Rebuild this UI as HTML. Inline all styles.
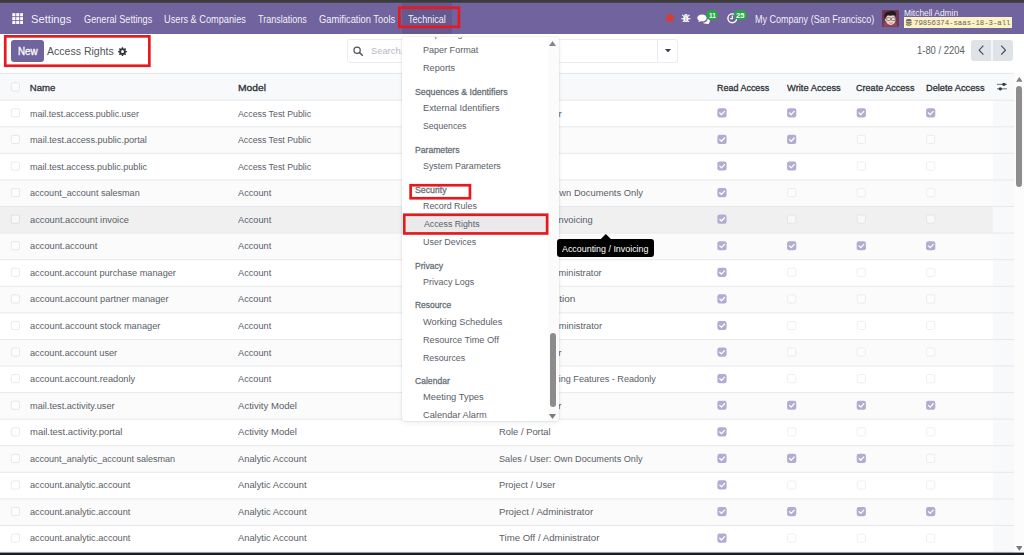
<!DOCTYPE html>
<html lang="en">
<head>
<meta charset="utf-8">
<title>Access Rights - Settings</title>
<style>
*{box-sizing:border-box;margin:0;padding:0}
html,body{width:1024px;height:555px;overflow:hidden;background:#fff}
body{position:relative;font-family:'Liberation Sans',sans-serif;font-size:9.6px;line-height:12px;color:#535960}
header,nav,main,section,aside{display:block;position:static}
.abs,.t{position:absolute}
.t{white-space:pre;line-height:12px;height:12px;transform-origin:0 50%}
#navbar{left:0;top:0;width:1024px;height:34px;background:#71639e}
#navactive{left:401.6px;top:3px;width:50.5px;height:31px;background:#665990}
#cp{left:0;top:34px;width:1024px;height:39px;background:#fff}
#btnnew{left:10.8px;top:39.8px;width:33.4px;height:22.4px;background:#71639e;border-radius:3px}
#search{left:346.6px;top:39.4px;width:331px;height:23.2px;border:1px solid #eaecf0;border-radius:3px;background:#fff}
#searchdiv{left:657px;top:40px;width:1px;height:22px;background:#e9ecef}
#pager{left:970.8px;top:39.7px;width:42.2px;height:21.1px;background:#dfe3e8;border-radius:3px}
#pagerdiv{left:991px;top:39.7px;width:1.6px;height:21.1px;background:#f3f4f6}
#vscroll{left:1014px;top:73px;width:10px;height:480px;background:#fcfcfc}
#vthumb{left:1016.2px;top:86px;width:5.4px;height:101.4px;background:#8d8d8d;border-radius:3px}
#dd{left:402px;top:37px;width:156.6px;height:383.6px;background:#fff;border-radius:3px;box-shadow:0 0 0 1px rgba(0,0,0,.045),0 2px 5px rgba(0,0,0,.07);overflow:hidden}
#ddclip{left:402px;top:37px;width:146px;height:383.6px;overflow:hidden}
#ddclip .t{margin-left:-402px;margin-top:-37px}
#ddtrack{left:548px;top:37px;width:10.6px;height:383.6px;background:#fbfbfb;border-radius:0 3px 3px 0}
#ddthumb{left:549.8px;top:333.4px;width:6px;height:74px;background:#8c8c8c;border-radius:3px}
#ddhover{left:403px;top:215px;width:145px;height:18.6px;background:#eaeaea}
#tip{left:556.7px;top:239px;width:97.2px;height:18.2px;background:#000;border-radius:3px}
#yellow{left:904.3px;top:16.6px;width:107.8px;height:11.4px;background:#fdf1c6}
#avatar{left:882.4px;top:10.2px;width:16.4px;height:16.6px;border-radius:2px;overflow:hidden;background:#6d3a4e}
.badge{height:10.2px;border-radius:5.2px;background:#2aa44a}
</style>
</head>
<body>
<header class="o_main_navbar">
<div class="abs" id="navbar"></div>
<svg class="abs" style="left:0;top:0" width="1024" height="4"><rect width="1024" height="2.75" fill="#3b3b3b"/></svg>
<div class="abs" id="navactive"></div>
<!-- apps grid icon -->
<svg class="abs" style="left:11.7px;top:12.7px" width="11.5" height="11.3" viewBox="0 0 11.8 11.8"><g fill="#fff"><rect x="0.2" y="0.2" width="3.2" height="3.2"/><rect x="4.3" y="0.2" width="3.2" height="3.2"/><rect x="8.4" y="0.2" width="3.2" height="3.2"/><rect x="0.2" y="4.3" width="3.2" height="3.2"/><rect x="4.3" y="4.3" width="3.2" height="3.2"/><rect x="8.4" y="4.3" width="3.2" height="3.2"/><rect x="0.2" y="8.4" width="3.2" height="3.2"/><rect x="4.3" y="8.4" width="3.2" height="3.2"/><rect x="8.4" y="8.4" width="3.2" height="3.2"/></g></svg>
<span class="t" style="left:30.71px;top:13px;font-size:11.4px;color:rgba(255,255,255,.93);transform:scaleX(0.9814);">Settings</span>
<span class="t" style="left:83.95px;top:14px;font-size:10.2px;color:rgba(255,255,255,.93);transform:scaleX(0.9000);">General Settings</span>
<span class="t" style="left:164.02px;top:14px;font-size:10.2px;color:rgba(255,255,255,.93);transform:scaleX(0.9039);">Users &amp; Companies</span>
<span class="t" style="left:258.38px;top:14px;font-size:10.2px;color:rgba(255,255,255,.93);transform:scaleX(0.8862);">Translations</span>
<span class="t" style="left:319.34px;top:14px;font-size:10.2px;color:rgba(255,255,255,.93);transform:scaleX(0.9167);">Gamification Tools</span>
<span class="t" style="left:407.78px;top:14px;font-size:10.2px;color:rgba(255,255,255,.93);transform:scaleX(0.8916);">Technical</span>
<span class="t" style="left:755.14px;top:14px;font-size:10.2px;color:rgba(255,255,255,.93);transform:scaleX(0.8854);">My Company (San Francisco)</span>
<span class="t" style="left:904.31px;top:7px;font-size:9.2px;color:rgba(255,255,255,.93);transform:scaleX(0.9138);">Mitchell Admin</span>
<!-- systray -->
<div class="abs" style="left:665.5px;top:13.7px;width:8.4px;height:8.4px;border-radius:50%;background:#d13f3c"></div>
<svg class="abs" style="left:681.3px;top:12.5px" width="9.8" height="9.8" viewBox="0 0 20 20"><g fill="#fff"><ellipse cx="10" cy="12" rx="5.2" ry="6.6"/><path d="M6 5.600a4 3.800 0 0 1 8 0z"/><rect x="0.600" y="10.600" width="18.800" height="2.200"/><path d="M1.800 4.800l4 3.300 1.500-1.700-4-3.300zM18.200 4.800l-4 3.300-1.500-1.700 4-3.300zM1.800 18.800l4-3.300 1.500 1.700-4 3.300zM18.200 18.800l-4-3.300-1.500 1.700 4 3.300z"/></g><rect x="9.300" y="7.500" width="1.400" height="9.500" fill="#8d82b3"/></svg>
<svg class="abs" style="left:697.4px;top:13.6px" width="13" height="10.6" viewBox="0 0 26 21"><g fill="#fff"><path d="M10 1C4.8 1 0.6 4 0.6 7.8c0 2.1 1.3 4 3.4 5.2-.3 1.1-.9 2.1-1.8 3 1.8-.2 3.4-.8 4.700-1.800 1 .200 2 .400 3.100 .400 5.200 0 9.400-3 9.400-6.800S15.200 1 10 1z"/><path d="M21.300 9.600c.050 4.300-4.300 7.500-9.800 7.900 1.600 1.300 3.900 2.100 6.400 2.100 1 0 2-.150 2.900-.400 1.300 1 2.800 1.500 4.400 1.700-.8-.8-1.400-1.700-1.700-2.700 1.500-1.100 2.400-2.600 2.400-4.300 0-1.700-1.700-3.400-4.600-4.300z"/></g></svg>
<div class="abs badge" style="left:706.2px;top:9.7px;width:11.8px"></div>
<svg class="abs" style="left:727px;top:13.2px" width="10.6" height="10.6" viewBox="0 0 20 20"><circle cx="10" cy="10" r="8.3" fill="none" stroke="#fff" stroke-width="2.6"/><path d="M10 4.500V10.600H6" fill="none" stroke="#fff" stroke-width="2.2"/></svg>
<div class="abs badge" style="left:733.5px;top:10.2px;width:13px"></div>
<div class="abs" id="avatar">
<svg width="16.4" height="16.6" viewBox="0 0 33 33"><rect width="33" height="33" fill="#6f3550"/><path d="M3 33v-5c0-3 4-5 8-5h11c4 0 8 2 8 5v5z" fill="#8b4a63"/><ellipse cx="17.500" cy="19" rx="9.800" ry="10.800" fill="#f6d3bd"/><ellipse cx="7.600" cy="20" rx="1.800" ry="2.600" fill="#f0c4aa"/><path d="M5.500 17.500C3 9 7 2.500 15 3c2-1.500 9-2 12.500 1.500 1 2.500.5 6-.5 8.500-.5-1.500-1.500-2.500-3-3-4 1.500-9.500 1.500-13 .5-2 1.500-3.500 3.500-5.500 7z" fill="#1f1c1e"/><rect x="9.500" y="15.500" width="7.500" height="5.200" rx="1" fill="#f4f4f4" stroke="#3b3b3f" stroke-width="1.200"/><rect x="19" y="15.500" width="7.500" height="5.200" rx="1" fill="#f4f4f4" stroke="#3b3b3f" stroke-width="1.200"/><path d="M14 25.500q4 2.400 8 0" stroke="#b06a58" stroke-width="1.300" fill="none"/></svg>
</div>
<div class="abs" id="yellow"></div>
<svg class="abs" style="left:906.3px;top:19.2px" width="5.600" height="6.800" viewBox="0 0 10 12"><g fill="#6a6a62"><ellipse cx="5" cy="2.200" rx="5" ry="2.200"/><path d="M0 3.700v2.400c0 1.200 2.200 2.200 5 2.200s5-1 5-2.200V3.700c0 1.200-2.200 2.200-5 2.200S0 4.900 0 3.700z"/><path d="M0 7.400v2.400c0 1.200 2.200 2.200 5 2.200s5-1 5-2.200V7.400c0 1.200-2.200 2.200-5 2.200S0 8.600 0 7.400z"/></g></svg>
<span class="t" style="left:913.84px;top:17px;font-size:8px;color:#66665c;transform:scaleX(0.9136);font-family:'Liberation Mono', monospace;">79856374-saas-18-3-all</span>
<span class="t" style="left:708.80px;top:10px;font-size:8px;color:#fff;transform:scaleX(0.8000);font-weight:700;">11</span>
<span class="t" style="left:735.76px;top:10px;font-size:8px;color:#fff;transform:scaleX(0.9412);font-weight:700;">25</span>
</header>

<!-- control panel -->
<section class="o_control_panel">
<div class="abs" id="cp"></div>
<div class="abs" id="btnnew"></div>
<div class="abs" id="search"></div>
<div class="abs" id="searchdiv"></div>
<svg class="abs" style="left:353.2px;top:46.2px" width="10.4" height="10" viewBox="0 0 21 20"><circle cx="8.300" cy="8.300" r="6.300" fill="none" stroke="#4c5258" stroke-width="2.500"/><path d="M13 13l5.800 5.600" stroke="#4c5258" stroke-width="3" stroke-linecap="round"/></svg>
<svg class="abs" style="left:664.8px;top:48.6px" width="6" height="3.600" viewBox="0 0 10 6"><path d="M0 0h10L5 6z" fill="#3d434a"/></svg>
<div class="abs" id="pager"></div>
<div class="abs" id="pagerdiv"></div>
<svg class="abs" style="left:978.2px;top:45.2px" width="6.6" height="10.4" viewBox="0 0 7 11"><path d="M5.700 0.700L1.200 5.500l4.500 4.800" fill="none" stroke="#3b4553" stroke-width="1.150"/></svg>
<svg class="abs" style="left:999.6px;top:45.2px" width="6.6" height="10.4" viewBox="0 0 7 11"><path d="M1.300 0.700L5.800 5.500l-4.500 4.800" fill="none" stroke="#3b4553" stroke-width="1.150"/></svg>
<svg class="abs" style="left:118.2px;top:46.6px" width="9" height="9" viewBox="0 0 24 24"><path fill="#30363c" fill-rule="evenodd" d="M10.200 0.500h3.600l.6 3.200 1.900.8 2.700-1.800 2.500 2.500-1.800 2.700.8 1.900 3.200.6v3.600l-3.200.6-.8 1.900 1.800 2.700-2.500 2.500-2.700-1.800-1.900.8-.6 3.200h-3.600l-.6-3.200-1.900-.8-2.700 1.800-2.500-2.500 1.800-2.700-.8-1.900-3.200-.6v-3.600l3.200-.6.8-1.900-1.800-2.700 2.500-2.500 2.700 1.800 1.900-.8zM12 8a4 4 0 1 0 0 8 4 4 0 0 0 0-8z"/></svg>
<span class="t" style="left:17.67px;top:46px;font-size:10.2px;color:#fff;transform:scaleX(0.9671);-webkit-text-stroke:0.28px #fff;">New</span>
<span class="t" style="left:47.20px;top:45px;font-size:11.4px;color:#50565d;transform:scaleX(0.9254);">Access Rights</span>
<span class="t" style="left:370.51px;top:45px;font-size:9.6px;color:#b4b9bf;transform:scaleX(0.9730);">Search...</span>
<span class="t" style="left:917.41px;top:45px;font-size:10.2px;color:#585e65;transform:scaleX(0.9248);">1-80 / 2204</span>
</section>

<!-- list -->
<main class="o_list_view">
<svg class="abs" style="left:0;top:0" width="1024" height="555" viewBox="0 0 1024 555">
<rect x="0" y="73.4" width="1014" height="27" fill="#f8f9fb"/>
<rect x="0" y="126.78" width="993" height="26.58" fill="#fbfbfb"/>
<rect x="0" y="179.94" width="993" height="26.58" fill="#fbfbfb"/>
<rect x="0" y="206.52" width="993" height="26.58" fill="#f0f0f0"/>
<rect x="0" y="233.10" width="993" height="26.58" fill="#fbfbfb"/>
<rect x="0" y="286.26" width="993" height="26.58" fill="#fbfbfb"/>
<rect x="0" y="339.42" width="993" height="26.58" fill="#fbfbfb"/>
<rect x="0" y="392.58" width="993" height="26.58" fill="#fbfbfb"/>
<rect x="0" y="445.74" width="993" height="26.58" fill="#fbfbfb"/>
<rect x="0" y="498.90" width="993" height="26.58" fill="#fbfbfb"/>
<rect x="992.8" y="100.2" width="21.2" height="451.80" fill="#f8f9fb"/>
<rect x="0" y="72.9" width="1014" height="1" fill="#e3e6e9"/>
<rect x="0" y="99.70" width="1014" height="1" fill="#e6e8eb"/>
<rect x="0" y="126.28" width="1014" height="1" fill="#e6e8eb"/>
<rect x="0" y="152.86" width="1014" height="1" fill="#e6e8eb"/>
<rect x="0" y="179.44" width="1014" height="1" fill="#e6e8eb"/>
<rect x="0" y="206.02" width="1014" height="1" fill="#e6e8eb"/>
<rect x="0" y="232.60" width="1014" height="1" fill="#e6e8eb"/>
<rect x="0" y="259.18" width="1014" height="1" fill="#e6e8eb"/>
<rect x="0" y="285.76" width="1014" height="1" fill="#e6e8eb"/>
<rect x="0" y="312.34" width="1014" height="1" fill="#e6e8eb"/>
<rect x="0" y="338.92" width="1014" height="1" fill="#e6e8eb"/>
<rect x="0" y="365.50" width="1014" height="1" fill="#e6e8eb"/>
<rect x="0" y="392.08" width="1014" height="1" fill="#e6e8eb"/>
<rect x="0" y="418.66" width="1014" height="1" fill="#e6e8eb"/>
<rect x="0" y="445.24" width="1014" height="1" fill="#e6e8eb"/>
<rect x="0" y="471.82" width="1014" height="1" fill="#e6e8eb"/>
<rect x="0" y="498.40" width="1014" height="1" fill="#e6e8eb"/>
<rect x="0" y="524.98" width="1014" height="1" fill="#e6e8eb"/>
<rect x="0" y="551.56" width="1014" height="1" fill="#e6e8eb"/>
<rect x="11.30" y="82.80" width="8.2" height="8.2" rx="1.8" fill="#fff" fill-opacity=".5" stroke="#6e7682" stroke-opacity="0.15" stroke-width="1"/>
<rect x="11.30" y="108.75" width="8.2" height="8.2" rx="1.8" fill="#fff" fill-opacity=".5" stroke="#6e7682" stroke-opacity="0.15" stroke-width="1"/>
<rect x="717.40" y="108.25" width="9.2" height="9.2" rx="2.1" fill="#b4abd0"/><path d="M719.75 113.00 l1.75 1.7 l3.0 -3.3" fill="none" stroke="#fff" stroke-width="1.25" stroke-linecap="round" stroke-linejoin="round"/>
<rect x="787.10" y="108.25" width="9.2" height="9.2" rx="2.1" fill="#b4abd0"/><path d="M789.45 113.00 l1.75 1.7 l3.0 -3.3" fill="none" stroke="#fff" stroke-width="1.25" stroke-linecap="round" stroke-linejoin="round"/>
<rect x="856.70" y="108.25" width="9.2" height="9.2" rx="2.1" fill="#b4abd0"/><path d="M859.05 113.00 l1.75 1.7 l3.0 -3.3" fill="none" stroke="#fff" stroke-width="1.25" stroke-linecap="round" stroke-linejoin="round"/>
<rect x="926.10" y="108.25" width="9.2" height="9.2" rx="2.1" fill="#b4abd0"/><path d="M928.45 113.00 l1.75 1.7 l3.0 -3.3" fill="none" stroke="#fff" stroke-width="1.25" stroke-linecap="round" stroke-linejoin="round"/>
<rect x="11.30" y="135.33" width="8.2" height="8.2" rx="1.8" fill="#fff" fill-opacity=".5" stroke="#6e7682" stroke-opacity="0.15" stroke-width="1"/>
<rect x="717.40" y="134.83" width="9.2" height="9.2" rx="2.1" fill="#b4abd0"/><path d="M719.75 139.58 l1.75 1.7 l3.0 -3.3" fill="none" stroke="#fff" stroke-width="1.25" stroke-linecap="round" stroke-linejoin="round"/>
<rect x="787.10" y="134.83" width="9.2" height="9.2" rx="2.1" fill="#b4abd0"/><path d="M789.45 139.58 l1.75 1.7 l3.0 -3.3" fill="none" stroke="#fff" stroke-width="1.25" stroke-linecap="round" stroke-linejoin="round"/>
<rect x="857.20" y="135.33" width="8.2" height="8.2" rx="1.8" fill="#fff" fill-opacity=".5" stroke="#6e7682" stroke-opacity="0.11" stroke-width="1"/>
<rect x="926.60" y="135.33" width="8.2" height="8.2" rx="1.8" fill="#fff" fill-opacity=".5" stroke="#6e7682" stroke-opacity="0.11" stroke-width="1"/>
<rect x="11.30" y="161.91" width="8.2" height="8.2" rx="1.8" fill="#fff" fill-opacity=".5" stroke="#6e7682" stroke-opacity="0.15" stroke-width="1"/>
<rect x="717.40" y="161.41" width="9.2" height="9.2" rx="2.1" fill="#b4abd0"/><path d="M719.75 166.16 l1.75 1.7 l3.0 -3.3" fill="none" stroke="#fff" stroke-width="1.25" stroke-linecap="round" stroke-linejoin="round"/>
<rect x="787.10" y="161.41" width="9.2" height="9.2" rx="2.1" fill="#b4abd0"/><path d="M789.45 166.16 l1.75 1.7 l3.0 -3.3" fill="none" stroke="#fff" stroke-width="1.25" stroke-linecap="round" stroke-linejoin="round"/>
<rect x="857.20" y="161.91" width="8.2" height="8.2" rx="1.8" fill="#fff" fill-opacity=".5" stroke="#6e7682" stroke-opacity="0.11" stroke-width="1"/>
<rect x="926.60" y="161.91" width="8.2" height="8.2" rx="1.8" fill="#fff" fill-opacity=".5" stroke="#6e7682" stroke-opacity="0.11" stroke-width="1"/>
<rect x="11.30" y="188.49" width="8.2" height="8.2" rx="1.8" fill="#fff" fill-opacity=".5" stroke="#6e7682" stroke-opacity="0.15" stroke-width="1"/>
<rect x="717.40" y="187.99" width="9.2" height="9.2" rx="2.1" fill="#b4abd0"/><path d="M719.75 192.74 l1.75 1.7 l3.0 -3.3" fill="none" stroke="#fff" stroke-width="1.25" stroke-linecap="round" stroke-linejoin="round"/>
<rect x="787.60" y="188.49" width="8.2" height="8.2" rx="1.8" fill="#fff" fill-opacity=".5" stroke="#6e7682" stroke-opacity="0.11" stroke-width="1"/>
<rect x="857.20" y="188.49" width="8.2" height="8.2" rx="1.8" fill="#fff" fill-opacity=".5" stroke="#6e7682" stroke-opacity="0.11" stroke-width="1"/>
<rect x="926.60" y="188.49" width="8.2" height="8.2" rx="1.8" fill="#fff" fill-opacity=".5" stroke="#6e7682" stroke-opacity="0.11" stroke-width="1"/>
<rect x="11.30" y="215.07" width="8.2" height="8.2" rx="1.8" fill="#fff" fill-opacity=".5" stroke="#6e7682" stroke-opacity="0.15" stroke-width="1"/>
<rect x="717.40" y="214.57" width="9.2" height="9.2" rx="2.1" fill="#b4abd0"/><path d="M719.75 219.32 l1.75 1.7 l3.0 -3.3" fill="none" stroke="#fff" stroke-width="1.25" stroke-linecap="round" stroke-linejoin="round"/>
<rect x="787.60" y="215.07" width="8.2" height="8.2" rx="1.8" fill="#fff" fill-opacity=".5" stroke="#6e7682" stroke-opacity="0.11" stroke-width="1"/>
<rect x="857.20" y="215.07" width="8.2" height="8.2" rx="1.8" fill="#fff" fill-opacity=".5" stroke="#6e7682" stroke-opacity="0.11" stroke-width="1"/>
<rect x="926.60" y="215.07" width="8.2" height="8.2" rx="1.8" fill="#fff" fill-opacity=".5" stroke="#6e7682" stroke-opacity="0.11" stroke-width="1"/>
<rect x="11.30" y="241.65" width="8.2" height="8.2" rx="1.8" fill="#fff" fill-opacity=".5" stroke="#6e7682" stroke-opacity="0.15" stroke-width="1"/>
<rect x="717.40" y="241.15" width="9.2" height="9.2" rx="2.1" fill="#b4abd0"/><path d="M719.75 245.90 l1.75 1.7 l3.0 -3.3" fill="none" stroke="#fff" stroke-width="1.25" stroke-linecap="round" stroke-linejoin="round"/>
<rect x="787.10" y="241.15" width="9.2" height="9.2" rx="2.1" fill="#b4abd0"/><path d="M789.45 245.90 l1.75 1.7 l3.0 -3.3" fill="none" stroke="#fff" stroke-width="1.25" stroke-linecap="round" stroke-linejoin="round"/>
<rect x="856.70" y="241.15" width="9.2" height="9.2" rx="2.1" fill="#b4abd0"/><path d="M859.05 245.90 l1.75 1.7 l3.0 -3.3" fill="none" stroke="#fff" stroke-width="1.25" stroke-linecap="round" stroke-linejoin="round"/>
<rect x="926.10" y="241.15" width="9.2" height="9.2" rx="2.1" fill="#b4abd0"/><path d="M928.45 245.90 l1.75 1.7 l3.0 -3.3" fill="none" stroke="#fff" stroke-width="1.25" stroke-linecap="round" stroke-linejoin="round"/>
<rect x="11.30" y="268.23" width="8.2" height="8.2" rx="1.8" fill="#fff" fill-opacity=".5" stroke="#6e7682" stroke-opacity="0.15" stroke-width="1"/>
<rect x="717.40" y="267.73" width="9.2" height="9.2" rx="2.1" fill="#b4abd0"/><path d="M719.75 272.48 l1.75 1.7 l3.0 -3.3" fill="none" stroke="#fff" stroke-width="1.25" stroke-linecap="round" stroke-linejoin="round"/>
<rect x="787.60" y="268.23" width="8.2" height="8.2" rx="1.8" fill="#fff" fill-opacity=".5" stroke="#6e7682" stroke-opacity="0.11" stroke-width="1"/>
<rect x="857.20" y="268.23" width="8.2" height="8.2" rx="1.8" fill="#fff" fill-opacity=".5" stroke="#6e7682" stroke-opacity="0.11" stroke-width="1"/>
<rect x="926.60" y="268.23" width="8.2" height="8.2" rx="1.8" fill="#fff" fill-opacity=".5" stroke="#6e7682" stroke-opacity="0.11" stroke-width="1"/>
<rect x="11.30" y="294.81" width="8.2" height="8.2" rx="1.8" fill="#fff" fill-opacity=".5" stroke="#6e7682" stroke-opacity="0.15" stroke-width="1"/>
<rect x="717.40" y="294.31" width="9.2" height="9.2" rx="2.1" fill="#b4abd0"/><path d="M719.75 299.06 l1.75 1.7 l3.0 -3.3" fill="none" stroke="#fff" stroke-width="1.25" stroke-linecap="round" stroke-linejoin="round"/>
<rect x="787.60" y="294.81" width="8.2" height="8.2" rx="1.8" fill="#fff" fill-opacity=".5" stroke="#6e7682" stroke-opacity="0.11" stroke-width="1"/>
<rect x="857.20" y="294.81" width="8.2" height="8.2" rx="1.8" fill="#fff" fill-opacity=".5" stroke="#6e7682" stroke-opacity="0.11" stroke-width="1"/>
<rect x="926.60" y="294.81" width="8.2" height="8.2" rx="1.8" fill="#fff" fill-opacity=".5" stroke="#6e7682" stroke-opacity="0.11" stroke-width="1"/>
<rect x="11.30" y="321.39" width="8.2" height="8.2" rx="1.8" fill="#fff" fill-opacity=".5" stroke="#6e7682" stroke-opacity="0.15" stroke-width="1"/>
<rect x="717.40" y="320.89" width="9.2" height="9.2" rx="2.1" fill="#b4abd0"/><path d="M719.75 325.64 l1.75 1.7 l3.0 -3.3" fill="none" stroke="#fff" stroke-width="1.25" stroke-linecap="round" stroke-linejoin="round"/>
<rect x="787.60" y="321.39" width="8.2" height="8.2" rx="1.8" fill="#fff" fill-opacity=".5" stroke="#6e7682" stroke-opacity="0.11" stroke-width="1"/>
<rect x="857.20" y="321.39" width="8.2" height="8.2" rx="1.8" fill="#fff" fill-opacity=".5" stroke="#6e7682" stroke-opacity="0.11" stroke-width="1"/>
<rect x="926.60" y="321.39" width="8.2" height="8.2" rx="1.8" fill="#fff" fill-opacity=".5" stroke="#6e7682" stroke-opacity="0.11" stroke-width="1"/>
<rect x="11.30" y="347.97" width="8.2" height="8.2" rx="1.8" fill="#fff" fill-opacity=".5" stroke="#6e7682" stroke-opacity="0.15" stroke-width="1"/>
<rect x="717.40" y="347.47" width="9.2" height="9.2" rx="2.1" fill="#b4abd0"/><path d="M719.75 352.22 l1.75 1.7 l3.0 -3.3" fill="none" stroke="#fff" stroke-width="1.25" stroke-linecap="round" stroke-linejoin="round"/>
<rect x="787.60" y="347.97" width="8.2" height="8.2" rx="1.8" fill="#fff" fill-opacity=".5" stroke="#6e7682" stroke-opacity="0.11" stroke-width="1"/>
<rect x="857.20" y="347.97" width="8.2" height="8.2" rx="1.8" fill="#fff" fill-opacity=".5" stroke="#6e7682" stroke-opacity="0.11" stroke-width="1"/>
<rect x="926.60" y="347.97" width="8.2" height="8.2" rx="1.8" fill="#fff" fill-opacity=".5" stroke="#6e7682" stroke-opacity="0.11" stroke-width="1"/>
<rect x="11.30" y="374.55" width="8.2" height="8.2" rx="1.8" fill="#fff" fill-opacity=".5" stroke="#6e7682" stroke-opacity="0.15" stroke-width="1"/>
<rect x="717.40" y="374.05" width="9.2" height="9.2" rx="2.1" fill="#b4abd0"/><path d="M719.75 378.80 l1.75 1.7 l3.0 -3.3" fill="none" stroke="#fff" stroke-width="1.25" stroke-linecap="round" stroke-linejoin="round"/>
<rect x="787.60" y="374.55" width="8.2" height="8.2" rx="1.8" fill="#fff" fill-opacity=".5" stroke="#6e7682" stroke-opacity="0.11" stroke-width="1"/>
<rect x="857.20" y="374.55" width="8.2" height="8.2" rx="1.8" fill="#fff" fill-opacity=".5" stroke="#6e7682" stroke-opacity="0.11" stroke-width="1"/>
<rect x="926.60" y="374.55" width="8.2" height="8.2" rx="1.8" fill="#fff" fill-opacity=".5" stroke="#6e7682" stroke-opacity="0.11" stroke-width="1"/>
<rect x="11.30" y="401.13" width="8.2" height="8.2" rx="1.8" fill="#fff" fill-opacity=".5" stroke="#6e7682" stroke-opacity="0.15" stroke-width="1"/>
<rect x="717.40" y="400.63" width="9.2" height="9.2" rx="2.1" fill="#b4abd0"/><path d="M719.75 405.38 l1.75 1.7 l3.0 -3.3" fill="none" stroke="#fff" stroke-width="1.25" stroke-linecap="round" stroke-linejoin="round"/>
<rect x="787.10" y="400.63" width="9.2" height="9.2" rx="2.1" fill="#b4abd0"/><path d="M789.45 405.38 l1.75 1.7 l3.0 -3.3" fill="none" stroke="#fff" stroke-width="1.25" stroke-linecap="round" stroke-linejoin="round"/>
<rect x="856.70" y="400.63" width="9.2" height="9.2" rx="2.1" fill="#b4abd0"/><path d="M859.05 405.38 l1.75 1.7 l3.0 -3.3" fill="none" stroke="#fff" stroke-width="1.25" stroke-linecap="round" stroke-linejoin="round"/>
<rect x="926.10" y="400.63" width="9.2" height="9.2" rx="2.1" fill="#b4abd0"/><path d="M928.45 405.38 l1.75 1.7 l3.0 -3.3" fill="none" stroke="#fff" stroke-width="1.25" stroke-linecap="round" stroke-linejoin="round"/>
<rect x="11.30" y="427.71" width="8.2" height="8.2" rx="1.8" fill="#fff" fill-opacity=".5" stroke="#6e7682" stroke-opacity="0.15" stroke-width="1"/>
<rect x="717.40" y="427.21" width="9.2" height="9.2" rx="2.1" fill="#b4abd0"/><path d="M719.75 431.96 l1.75 1.7 l3.0 -3.3" fill="none" stroke="#fff" stroke-width="1.25" stroke-linecap="round" stroke-linejoin="round"/>
<rect x="787.60" y="427.71" width="8.2" height="8.2" rx="1.8" fill="#fff" fill-opacity=".5" stroke="#6e7682" stroke-opacity="0.11" stroke-width="1"/>
<rect x="857.20" y="427.71" width="8.2" height="8.2" rx="1.8" fill="#fff" fill-opacity=".5" stroke="#6e7682" stroke-opacity="0.11" stroke-width="1"/>
<rect x="926.60" y="427.71" width="8.2" height="8.2" rx="1.8" fill="#fff" fill-opacity=".5" stroke="#6e7682" stroke-opacity="0.11" stroke-width="1"/>
<rect x="11.30" y="454.29" width="8.2" height="8.2" rx="1.8" fill="#fff" fill-opacity=".5" stroke="#6e7682" stroke-opacity="0.15" stroke-width="1"/>
<rect x="717.40" y="453.79" width="9.2" height="9.2" rx="2.1" fill="#b4abd0"/><path d="M719.75 458.54 l1.75 1.7 l3.0 -3.3" fill="none" stroke="#fff" stroke-width="1.25" stroke-linecap="round" stroke-linejoin="round"/>
<rect x="787.10" y="453.79" width="9.2" height="9.2" rx="2.1" fill="#b4abd0"/><path d="M789.45 458.54 l1.75 1.7 l3.0 -3.3" fill="none" stroke="#fff" stroke-width="1.25" stroke-linecap="round" stroke-linejoin="round"/>
<rect x="856.70" y="453.79" width="9.2" height="9.2" rx="2.1" fill="#b4abd0"/><path d="M859.05 458.54 l1.75 1.7 l3.0 -3.3" fill="none" stroke="#fff" stroke-width="1.25" stroke-linecap="round" stroke-linejoin="round"/>
<rect x="926.60" y="454.29" width="8.2" height="8.2" rx="1.8" fill="#fff" fill-opacity=".5" stroke="#6e7682" stroke-opacity="0.11" stroke-width="1"/>
<rect x="11.30" y="480.87" width="8.2" height="8.2" rx="1.8" fill="#fff" fill-opacity=".5" stroke="#6e7682" stroke-opacity="0.15" stroke-width="1"/>
<rect x="717.40" y="480.37" width="9.2" height="9.2" rx="2.1" fill="#b4abd0"/><path d="M719.75 485.12 l1.75 1.7 l3.0 -3.3" fill="none" stroke="#fff" stroke-width="1.25" stroke-linecap="round" stroke-linejoin="round"/>
<rect x="787.60" y="480.87" width="8.2" height="8.2" rx="1.8" fill="#fff" fill-opacity=".5" stroke="#6e7682" stroke-opacity="0.11" stroke-width="1"/>
<rect x="857.20" y="480.87" width="8.2" height="8.2" rx="1.8" fill="#fff" fill-opacity=".5" stroke="#6e7682" stroke-opacity="0.11" stroke-width="1"/>
<rect x="926.60" y="480.87" width="8.2" height="8.2" rx="1.8" fill="#fff" fill-opacity=".5" stroke="#6e7682" stroke-opacity="0.11" stroke-width="1"/>
<rect x="11.30" y="507.45" width="8.2" height="8.2" rx="1.8" fill="#fff" fill-opacity=".5" stroke="#6e7682" stroke-opacity="0.15" stroke-width="1"/>
<rect x="717.40" y="506.95" width="9.2" height="9.2" rx="2.1" fill="#b4abd0"/><path d="M719.75 511.70 l1.75 1.7 l3.0 -3.3" fill="none" stroke="#fff" stroke-width="1.25" stroke-linecap="round" stroke-linejoin="round"/>
<rect x="787.10" y="506.95" width="9.2" height="9.2" rx="2.1" fill="#b4abd0"/><path d="M789.45 511.70 l1.75 1.7 l3.0 -3.3" fill="none" stroke="#fff" stroke-width="1.25" stroke-linecap="round" stroke-linejoin="round"/>
<rect x="856.70" y="506.95" width="9.2" height="9.2" rx="2.1" fill="#b4abd0"/><path d="M859.05 511.70 l1.75 1.7 l3.0 -3.3" fill="none" stroke="#fff" stroke-width="1.25" stroke-linecap="round" stroke-linejoin="round"/>
<rect x="926.10" y="506.95" width="9.2" height="9.2" rx="2.1" fill="#b4abd0"/><path d="M928.45 511.70 l1.75 1.7 l3.0 -3.3" fill="none" stroke="#fff" stroke-width="1.25" stroke-linecap="round" stroke-linejoin="round"/>
<rect x="11.30" y="534.03" width="8.2" height="8.2" rx="1.8" fill="#fff" fill-opacity=".5" stroke="#6e7682" stroke-opacity="0.15" stroke-width="1"/>
<rect x="717.40" y="533.53" width="9.2" height="9.2" rx="2.1" fill="#b4abd0"/><path d="M719.75 538.28 l1.75 1.7 l3.0 -3.3" fill="none" stroke="#fff" stroke-width="1.25" stroke-linecap="round" stroke-linejoin="round"/>
<rect x="787.60" y="534.03" width="8.2" height="8.2" rx="1.8" fill="#fff" fill-opacity=".5" stroke="#6e7682" stroke-opacity="0.11" stroke-width="1"/>
<rect x="857.20" y="534.03" width="8.2" height="8.2" rx="1.8" fill="#fff" fill-opacity=".5" stroke="#6e7682" stroke-opacity="0.11" stroke-width="1"/>
<rect x="926.60" y="534.03" width="8.2" height="8.2" rx="1.8" fill="#fff" fill-opacity=".5" stroke="#6e7682" stroke-opacity="0.11" stroke-width="1"/>
</svg>
<svg class="abs" style="left:997px;top:82.4px" width="10" height="9.200" viewBox="0 0 20 18.400"><g fill="none" stroke="#3a424d" stroke-width="1.500"><path d="M0 4.700h20M0 13.700h20"/></g><circle cx="13.800" cy="4.700" r="3.400" fill="#333b46"/><circle cx="6.600" cy="13.700" r="3.400" fill="#333b46"/></svg>
<span class="t" style="left:29.75px;top:82px;font-size:9.6px;color:#2c3036;transform:scaleX(1.0000);-webkit-text-stroke:0.28px #2c3036;">Name</span>
<span class="t" style="left:237.59px;top:82px;font-size:9.6px;color:#2c3036;transform:scaleX(1.0747);-webkit-text-stroke:0.28px #2c3036;">Model</span>
<span class="t" style="left:498.95px;top:82px;font-size:9.6px;color:#2c3036;transform:scaleX(1.1068);-webkit-text-stroke:0.28px #2c3036;">Group</span>
<span class="t" style="left:716.90px;top:82px;font-size:9.6px;color:#2c3036;transform:scaleX(0.9345);-webkit-text-stroke:0.28px #2c3036;">Read Access</span>
<span class="t" style="left:787.30px;top:82px;font-size:9.6px;color:#2c3036;transform:scaleX(0.9727);-webkit-text-stroke:0.28px #2c3036;">Write Access</span>
<span class="t" style="left:855.93px;top:82px;font-size:9.6px;color:#2c3036;transform:scaleX(0.9443);-webkit-text-stroke:0.28px #2c3036;">Create Access</span>
<span class="t" style="left:925.78px;top:82px;font-size:9.6px;color:#2c3036;transform:scaleX(0.9623);-webkit-text-stroke:0.28px #2c3036;">Delete Access</span>
<span class="t" style="left:30.04px;top:108px;font-size:9.6px;color:#5a6067;transform:scaleX(0.9285);">mail.test.access.public.user</span>
<span class="t" style="left:238.40px;top:108px;font-size:9.6px;color:#5a6067;transform:scaleX(0.9164);">Access Test Public</span>
<span class="t" style="left:513.60px;top:108px;font-size:9.6px;color:#5a6067;transform:scaleX(1.0000);">Role / User</span>
<span class="t" style="left:30.02px;top:134px;font-size:9.6px;color:#5a6067;transform:scaleX(0.9523);">mail.test.access.public.portal</span>
<span class="t" style="left:238.40px;top:134px;font-size:9.6px;color:#5a6067;transform:scaleX(0.9164);">Access Test Public</span>
<span class="t" style="left:498.77px;top:134px;font-size:9.6px;color:#5a6067;transform:scaleX(0.9786);">Role / Portal</span>
<span class="t" style="left:30.03px;top:161px;font-size:9.6px;color:#5a6067;transform:scaleX(0.9455);">mail.test.access.public.public</span>
<span class="t" style="left:238.40px;top:161px;font-size:9.6px;color:#5a6067;transform:scaleX(0.9164);">Access Test Public</span>
<span class="t" style="left:498.79px;top:161px;font-size:9.6px;color:#5a6067;transform:scaleX(0.9509);">Role / Public</span>
<span class="t" style="left:30.03px;top:187px;font-size:9.6px;color:#5a6067;transform:scaleX(0.9432);">account_account salesman</span>
<span class="t" style="left:238.40px;top:187px;font-size:9.6px;color:#5a6067;transform:scaleX(0.9583);">Account</span>
<span class="t" style="left:495.61px;top:187px;font-size:9.6px;color:#5a6067;transform:scaleX(0.9738);">Sales / User: Own Documents Only</span>
<span class="t" style="left:30.02px;top:214px;font-size:9.6px;color:#5a6067;transform:scaleX(0.9665);">account.account invoice</span>
<span class="t" style="left:238.40px;top:214px;font-size:9.6px;color:#5a6067;transform:scaleX(0.9583);">Account</span>
<span class="t" style="left:502.02px;top:214px;font-size:9.6px;color:#5a6067;transform:scaleX(0.9723);">Accounting / Invoicing</span>
<span class="t" style="left:30.02px;top:240px;font-size:9.6px;color:#5a6067;transform:scaleX(0.9632);">account.account</span>
<span class="t" style="left:238.40px;top:240px;font-size:9.6px;color:#5a6067;transform:scaleX(0.9583);">Account</span>
<span class="t" style="left:504.00px;top:240px;font-size:9.6px;color:#5a6067;transform:scaleX(1.0000);">Role / User</span>
<span class="t" style="left:30.02px;top:267px;font-size:9.6px;color:#5a6067;transform:scaleX(0.9566);">account.account purchase manager</span>
<span class="t" style="left:238.40px;top:267px;font-size:9.6px;color:#5a6067;transform:scaleX(0.9583);">Account</span>
<span class="t" style="left:500.90px;top:267px;font-size:9.6px;color:#5a6067;transform:scaleX(0.9627);">Purchase / Administrator</span>
<span class="t" style="left:30.02px;top:293px;font-size:9.6px;color:#5a6067;transform:scaleX(0.9660);">account.account partner manager</span>
<span class="t" style="left:238.40px;top:293px;font-size:9.6px;color:#5a6067;transform:scaleX(0.9583);">Account</span>
<span class="t" style="left:500.16px;top:293px;font-size:9.6px;color:#5a6067;transform:scaleX(1.0467);">Contact Creation</span>
<span class="t" style="left:30.02px;top:320px;font-size:9.6px;color:#5a6067;transform:scaleX(0.9625);">account.account stock manager</span>
<span class="t" style="left:238.40px;top:320px;font-size:9.6px;color:#5a6067;transform:scaleX(0.9583);">Account</span>
<span class="t" style="left:501.83px;top:320px;font-size:9.6px;color:#5a6067;transform:scaleX(0.9672);">Inventory / Administrator</span>
<span class="t" style="left:30.02px;top:347px;font-size:9.6px;color:#5a6067;transform:scaleX(0.9558);">account.account user</span>
<span class="t" style="left:238.40px;top:347px;font-size:9.6px;color:#5a6067;transform:scaleX(0.9583);">Account</span>
<span class="t" style="left:513.40px;top:347px;font-size:9.6px;color:#5a6067;transform:scaleX(1.0000);">Role / User</span>
<span class="t" style="left:30.02px;top:373px;font-size:9.6px;color:#5a6067;transform:scaleX(0.9609);">account.account.readonly</span>
<span class="t" style="left:238.40px;top:373px;font-size:9.6px;color:#5a6067;transform:scaleX(0.9583);">Account</span>
<span class="t" style="left:500.57px;top:373px;font-size:9.6px;color:#5a6067;transform:scaleX(0.9484);">Show Accounting Features - Readonly</span>
<span class="t" style="left:30.02px;top:400px;font-size:9.6px;color:#5a6067;transform:scaleX(0.9573);">mail.test.activity.user</span>
<span class="t" style="left:238.40px;top:400px;font-size:9.6px;color:#5a6067;transform:scaleX(0.9966);">Activity Model</span>
<span class="t" style="left:513.40px;top:400px;font-size:9.6px;color:#5a6067;transform:scaleX(1.0000);">Role / User</span>
<span class="t" style="left:30.01px;top:426px;font-size:9.6px;color:#5a6067;transform:scaleX(0.9859);">mail.test.activity.portal</span>
<span class="t" style="left:238.40px;top:426px;font-size:9.6px;color:#5a6067;transform:scaleX(0.9966);">Activity Model</span>
<span class="t" style="left:498.77px;top:426px;font-size:9.6px;color:#5a6067;transform:scaleX(0.9786);">Role / Portal</span>
<span class="t" style="left:30.03px;top:453px;font-size:9.6px;color:#5a6067;transform:scaleX(0.9412);">account_analytic_account salesman</span>
<span class="t" style="left:238.40px;top:453px;font-size:9.6px;color:#5a6067;transform:scaleX(0.9730);">Analytic Account</span>
<span class="t" style="left:499.02px;top:453px;font-size:9.6px;color:#5a6067;transform:scaleX(0.9511);">Sales / User: Own Documents Only</span>
<span class="t" style="left:30.02px;top:479px;font-size:9.6px;color:#5a6067;transform:scaleX(0.9550);">account.analytic.account</span>
<span class="t" style="left:238.40px;top:479px;font-size:9.6px;color:#5a6067;transform:scaleX(0.9730);">Analytic Account</span>
<span class="t" style="left:498.77px;top:479px;font-size:9.6px;color:#5a6067;transform:scaleX(0.9694);">Project / User</span>
<span class="t" style="left:30.02px;top:506px;font-size:9.6px;color:#5a6067;transform:scaleX(0.9550);">account.analytic.account</span>
<span class="t" style="left:238.40px;top:506px;font-size:9.6px;color:#5a6067;transform:scaleX(0.9730);">Analytic Account</span>
<span class="t" style="left:498.75px;top:506px;font-size:9.6px;color:#5a6067;transform:scaleX(1.0027);">Project / Administrator</span>
<span class="t" style="left:30.02px;top:532px;font-size:9.6px;color:#5a6067;transform:scaleX(0.9550);">account.analytic.account</span>
<span class="t" style="left:238.40px;top:532px;font-size:9.6px;color:#5a6067;transform:scaleX(0.9730);">Analytic Account</span>
<span class="t" style="left:499.25px;top:532px;font-size:9.6px;color:#5a6067;transform:scaleX(1.0010);">Time Off / Administrator</span>
<div class="abs" id="vscroll"></div>
<svg class="abs" style="left:1015.7px;top:77.3px" width="6.600" height="4.800" viewBox="0 0 10 7"><path d="M0 7h10L5 0z" fill="#828282"/></svg>
<svg class="abs" style="left:1015.7px;top:546px" width="6.600" height="4.800" viewBox="0 0 10 7"><path d="M0 0h10L5 7z" fill="#7a7a7a"/></svg>
<div class="abs" id="vthumb"></div>
</main>

<!-- Technical dropdown -->
<nav class="o_dropdown_menu" role="menu">
<div class="abs" id="dd"></div>
<div class="abs" id="ddhover"></div>
<div class="abs" id="ddclip">
<span class="t" style="left:423.09px;top:44px;font-size:9.6px;color:#5a6067;transform:scaleX(0.9414);">Paper Format</span>
<span class="t" style="left:423.08px;top:62px;font-size:9.6px;color:#5a6067;transform:scaleX(0.9538);">Reports</span>
<span class="t" style="left:415.22px;top:86px;font-size:9.2px;color:#676e76;transform:scaleX(0.9538);-webkit-text-stroke:0.28px #676e76;">Sequences &amp; Identifiers</span>
<span class="t" style="left:423.08px;top:102px;font-size:9.6px;color:#5a6067;transform:scaleX(0.9631);">External Identifiers</span>
<span class="t" style="left:423.35px;top:120px;font-size:9.6px;color:#5a6067;transform:scaleX(0.9037);">Sequences</span>
<span class="t" style="left:415.00px;top:144px;font-size:9.2px;color:#676e76;transform:scaleX(0.9376);-webkit-text-stroke:0.28px #676e76;">Parameters</span>
<span class="t" style="left:423.34px;top:160px;font-size:9.6px;color:#5a6067;transform:scaleX(0.9234);">System Parameters</span>
<span class="t" style="left:415.22px;top:184px;font-size:9.2px;color:#676e76;transform:scaleX(0.9527);-webkit-text-stroke:0.28px #676e76;">Security</span>
<span class="t" style="left:423.11px;top:200px;font-size:9.6px;color:#5a6067;transform:scaleX(0.9263);">Record Rules</span>
<span class="t" style="left:423.80px;top:218px;font-size:9.6px;color:#5a6067;transform:scaleX(0.9140);">Access Rights</span>
<span class="t" style="left:423.10px;top:236px;font-size:9.6px;color:#5a6067;transform:scaleX(0.9321);">User Devices</span>
<span class="t" style="left:415.00px;top:260px;font-size:9.2px;color:#676e76;transform:scaleX(0.9333);-webkit-text-stroke:0.28px #676e76;">Privacy</span>
<span class="t" style="left:423.10px;top:276px;font-size:9.6px;color:#5a6067;transform:scaleX(0.9333);">Privacy Logs</span>
<span class="t" style="left:415.01px;top:299px;font-size:9.2px;color:#676e76;transform:scaleX(0.9176);-webkit-text-stroke:0.28px #676e76;">Resource</span>
<span class="t" style="left:423.00px;top:316px;font-size:9.6px;color:#5a6067;transform:scaleX(0.9617);">Working Schedules</span>
<span class="t" style="left:423.09px;top:334px;font-size:9.6px;color:#5a6067;transform:scaleX(0.9519);">Resource Time Off</span>
<span class="t" style="left:423.11px;top:352px;font-size:9.6px;color:#5a6067;transform:scaleX(0.9184);">Resources</span>
<span class="t" style="left:415.23px;top:375px;font-size:9.2px;color:#676e76;transform:scaleX(0.9333);-webkit-text-stroke:0.28px #676e76;">Calendar</span>
<span class="t" style="left:423.07px;top:391px;font-size:9.6px;color:#5a6067;transform:scaleX(0.9763);">Meeting Types</span>
<span class="t" style="left:423.32px;top:409px;font-size:9.6px;color:#5a6067;transform:scaleX(0.9646);">Calendar Alarm</span>
<span class="t" style="left:423.09px;top:28px;font-size:9.6px;color:#5a6067;transform:scaleX(0.9491);">Reporting</span>
</div>
<div class="abs" id="ddtrack"></div>
<svg class="abs" style="left:549.4px;top:41px" width="7" height="5" viewBox="0 0 10 7"><path d="M0 7h10L5 0z" fill="#858585"/></svg>
<svg class="abs" style="left:549.4px;top:413.8px" width="7" height="5" viewBox="0 0 10 7"><path d="M0 0h10L5 7z" fill="#7c7c7c"/></svg>
<div class="abs" id="ddthumb"></div>
</nav>

<!-- tooltip -->
<aside class="o_tooltip" role="tooltip">
<svg class="abs" style="left:599.6px;top:233.6px" width="11.600" height="5.800" viewBox="0 0 12 6"><path d="M0 6L6 0l6 6z" fill="#000"/></svg>
<div class="abs" id="tip"></div>
<span class="t" style="left:562.20px;top:243px;font-size:9.3px;color:#fff;transform:scaleX(0.9560);">Accounting / Invoicing</span>
</aside>

<!-- annotation rectangles -->
<svg class="abs" style="left:0;top:0" width="1024" height="555" viewBox="0 0 1024 555"><g fill="none" stroke="#e61a1e" stroke-width="2.7"><rect x="399.35" y="7.75" width="59.60" height="19.10"/><rect x="5.25" y="36.35" width="144.10" height="29.40"/><rect x="410.65" y="185.25" width="59.30" height="13.00"/><rect x="404.25" y="214.75" width="142.90" height="18.70"/></g></svg>
<svg class="abs" style="left:0;top:550px" width="1024" height="5"><rect y="2.6" width="1024" height="2.4" fill="#191b25"/></svg>
</body>
</html>
